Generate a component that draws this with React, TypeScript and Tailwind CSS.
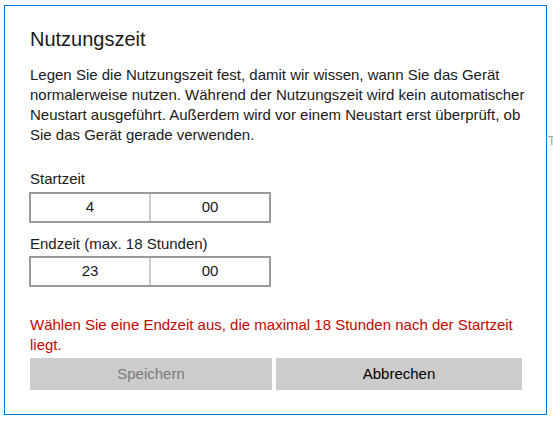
export default function App() {
  return (
    <div
      className="relative h-[424px] w-[553px] overflow-hidden bg-white text-black"
      style={{ fontFamily: '"Segoe UI", "Liberation Sans", Arial, sans-serif' }}
    >
      <div className="ml-[4px] mt-[5px] flex h-[410px] w-[543px] flex-col border border-[#0078d7] pl-[25px] pr-[24px] pt-[19px]">
        <h1 className="text-[20px] leading-[28px] text-[#1a1a1a]">Nutzungszeit</h1>

        <p className="mt-[12px] whitespace-nowrap text-[15px] leading-[20px] text-[#1a1a1a]">
          Legen Sie die Nutzungszeit fest, damit wir wissen, wann Sie das Gerät
          <br />
          normalerweise nutzen. Während der Nutzungszeit wird kein automatischer
          <br />
          Neustart ausgeführt. Außerdem wird vor einem Neustart erst überprüft, ob
          <br />
          Sie das Gerät gerade verwenden.
        </p>

        <div className="mt-[24px] text-[15px] leading-[20px] text-[#1a1a1a]">Startzeit</div>
        <div className="ml-[-1px] mt-[3px] flex h-[31px] w-[242px] border-2 border-[#999999] text-[15px] text-[#1a1a1a]">
          <div className="flex flex-1 items-center justify-center border-r-2 border-[#cccccc]">4</div>
          <div className="flex flex-1 items-center justify-center">00</div>
        </div>

        <div className="mt-[11px] text-[15px] leading-[20px] text-[#1a1a1a]">Endzeit (max. 18 Stunden)</div>
        <div className="ml-[-1px] mt-[2px] flex h-[31px] w-[242px] border-2 border-[#999999] text-[15px] text-[#1a1a1a]">
          <div className="flex flex-1 items-center justify-center border-r-2 border-[#cccccc]">23</div>
          <div className="flex flex-1 items-center justify-center">00</div>
        </div>

        <p className="mt-[28px] text-[15px] leading-[20px] text-[#c50500]">
          Wählen Sie eine Endzeit aus, die maximal 18 Stunden nach der Startzeit
          <br />
          liegt.
        </p>

        <div className="mt-[3px] flex gap-[4px] text-[15px]">
          <button className="h-[32px] w-[242px] bg-[#cccccc] text-[#7a7a7a]" disabled>
            Speichern
          </button>
          <button className="h-[32px] flex-1 bg-[#cccccc] text-black">Abbrechen</button>
        </div>
      </div>

      <span className="absolute left-[548px] top-[134px] text-[12px] leading-[14px] text-[#a0a0a0]">T</span>
    </div>
  )
}
